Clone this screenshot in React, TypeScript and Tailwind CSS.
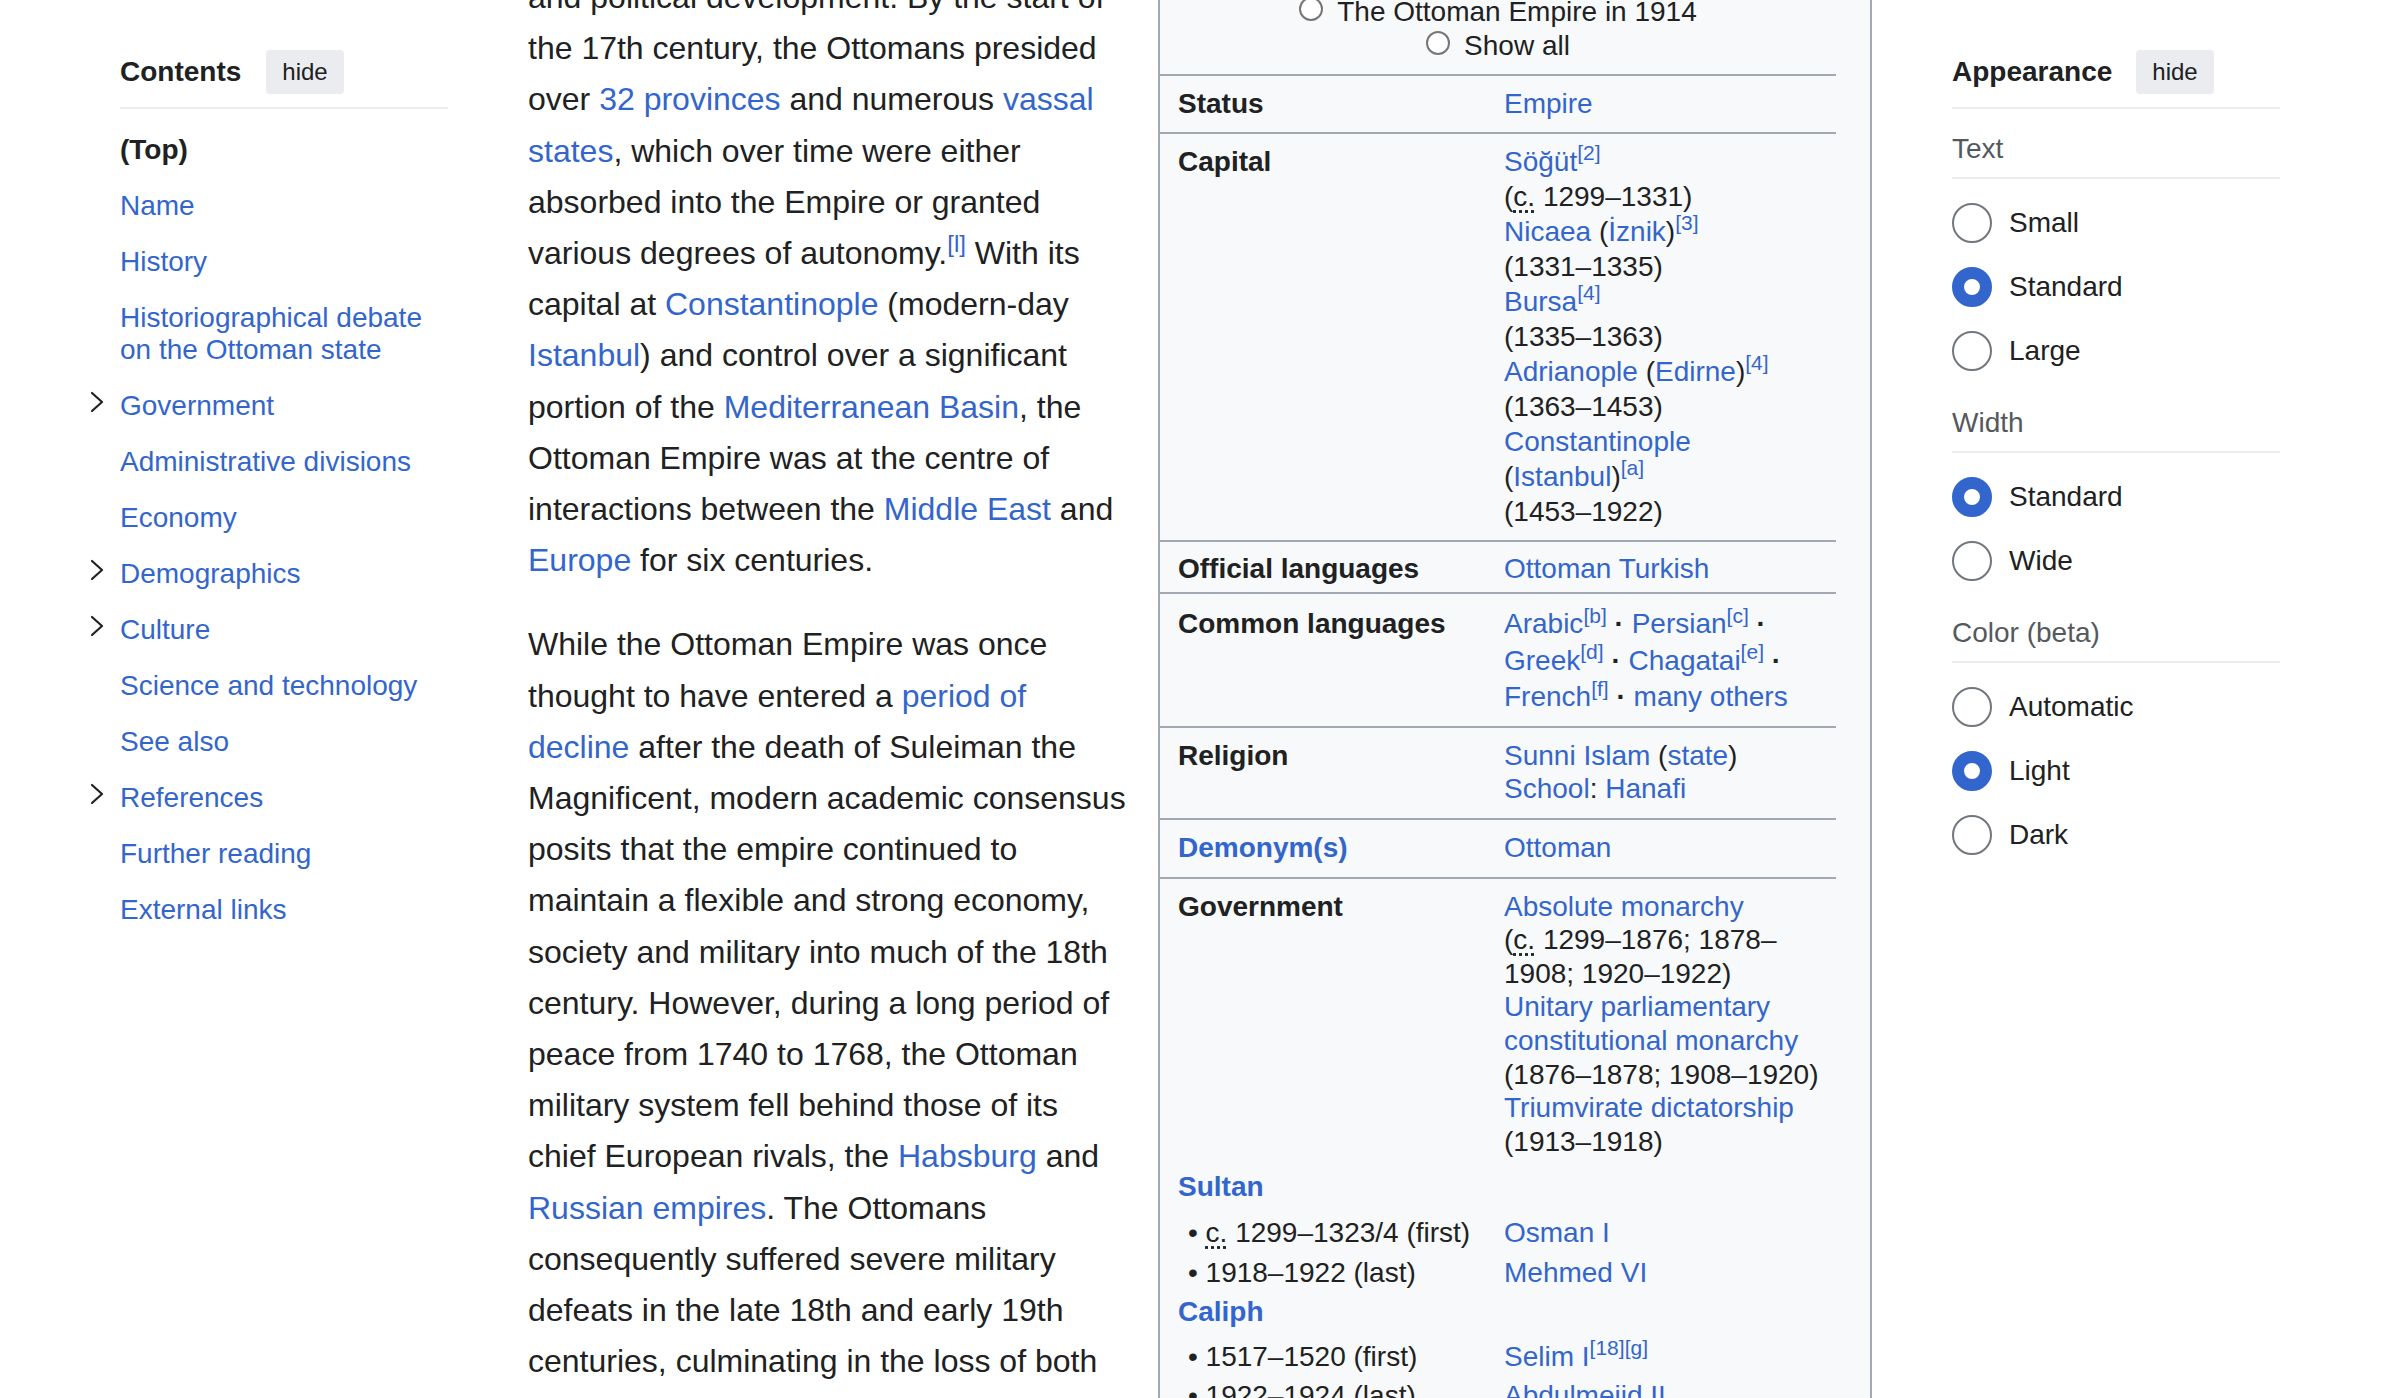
import React from "react";

function L({ children }: { children: React.ReactNode }) {
  return <a className="text-[#3366cc]">{children}</a>;
}

function Ref({ children }: { children: React.ReactNode }) {
  return <sup className="text-[#3366cc]">[{children}]</sup>;
}

function Circa() {
  return (
    <abbr title="circa" className="underline decoration-dotted underline-offset-[4px]">
      c.
    </abbr>
  );
}

function Chevron() {
  return (
    <svg viewBox="0 0 14 22" fill="none" className="h-[22px] w-[14px]" stroke="#202122" strokeWidth={2.2}>
      <path d="M2 2l10 9-10 9" strokeLinecap="round" strokeLinejoin="round" />
    </svg>
  );
}

function PanelHeader({ title, gap }: { title: string; gap: string }) {
  return (
    <>
      <div className={`flex h-[44px] items-center ${gap}`}>
        <span className="text-[28px] font-bold leading-[32px]">{title}</span>
        <button className="h-[44px] rounded-[4px] bg-[#eaecf0] px-[16px] text-[24px] leading-[32px] text-[#202122]">
          hide
        </button>
      </div>
      <div className="mt-[13px] h-[2px] bg-[#eaecf0]" />
    </>
  );
}

const tocItems: { label: React.ReactNode; sub?: boolean }[] = [
  { label: "Name" },
  { label: "History" },
  {
    label: (
      <>
        Historiographical debate
        <br />
        on the Ottoman state
      </>
    ),
  },
  { label: "Government", sub: true },
  { label: "Administrative divisions" },
  { label: "Economy" },
  { label: "Demographics", sub: true },
  { label: "Culture", sub: true },
  { label: "Science and technology" },
  { label: "See also" },
  { label: "References", sub: true },
  { label: "Further reading" },
  { label: "External links" },
];

function Contents() {
  return (
    <nav className="mt-[50px] w-[328px] shrink-0">
      <PanelHeader title="Contents" gap="gap-[25px]" />
      <ul className="mt-[13px] text-[28px] leading-[32px]">
        <li className="py-[12px] font-bold">(Top)</li>
        {tocItems.map((item, i) => (
          <li key={i} className="-ml-[36px] flex py-[12px]">
            <span className="w-[36px] shrink-0 pl-[6px] pt-[1px]">{item.sub && <Chevron />}</span>
            <L>{item.label}</L>
          </li>
        ))}
      </ul>
    </nav>
  );
}

const para1: React.ReactNode[] = [
  <>and political development. By the start of</>,
  <>the 17th century, the Ottomans presided</>,
  <>
    over <L>32 provinces</L> and numerous <L>vassal</L>
  </>,
  <>
    <L>states</L>, which over time were either
  </>,
  <>absorbed into the Empire or granted</>,
  <>
    various degrees of autonomy.<Ref>l</Ref> With its
  </>,
  <>
    capital at <L>Constantinople</L> (modern-day
  </>,
  <>
    <L>Istanbul</L>) and control over a significant
  </>,
  <>
    portion of the <L>Mediterranean Basin</L>, the
  </>,
  <>Ottoman Empire was at the centre of</>,
  <>
    interactions between the <L>Middle East</L> and
  </>,
  <>
    <L>Europe</L> for six centuries.
  </>,
];

const para2: React.ReactNode[] = [
  <>While the Ottoman Empire was once</>,
  <>
    thought to have entered a <L>period of</L>
  </>,
  <>
    <L>decline</L> after the death of Suleiman the
  </>,
  <>Magnificent, modern academic consensus</>,
  <>posits that the empire continued to</>,
  <>maintain a flexible and strong economy,</>,
  <>society and military into much of the 18th</>,
  <>century. However, during a long period of</>,
  <>peace from 1740 to 1768, the Ottoman</>,
  <>military system fell behind those of its</>,
  <>
    chief European rivals, the <L>Habsburg</L> and
  </>,
  <>
    <L>Russian empires</L>. The Ottomans
  </>,
  <>consequently suffered severe military</>,
  <>defeats in the late 18th and early 19th</>,
  <>centuries, culminating in the loss of both</>,
  <>Ottoman territories and alliances.</>,
];

function Lines({ lines }: { lines: React.ReactNode[] }) {
  return (
    <>
      {lines.map((line, i) => (
        <span key={i} className="block whitespace-nowrap">
          {line}
        </span>
      ))}
    </>
  );
}

function Article() {
  return (
    <main className="-mt-[28px] ml-[80px] w-[630px] shrink-0 text-[32px] leading-[51.2px] text-[#202122]">
      <p>
        <Lines lines={para1} />
      </p>
      <p className="mt-[33px]">
        <Lines lines={para2} />
      </p>
    </main>
  );
}

function SmallRadio() {
  return (
    <span className="mr-[14px] inline-block h-[24px] w-[24px] rounded-full border-2 border-[#767676] bg-white align-baseline" />
  );
}

function Row({
  label,
  children,
  className = "pt-[10px] pb-[12px]",
  leading = "leading-[33.6px]",
  border = true,
  sub = false,
}: {
  label: React.ReactNode;
  children?: React.ReactNode;
  className?: string;
  leading?: string;
  border?: boolean;
  sub?: boolean;
}) {
  return (
    <div
      className={`grid grid-cols-[326px_1fr] pl-[18px] ${leading} ${className} ${
        border ? "border-t-2 border-[#a2a9b1]" : ""
      }`}
    >
      <div className={sub ? "whitespace-nowrap pl-[10px]" : "font-bold"}>{label}</div>
      <div className="whitespace-nowrap">{children}</div>
    </div>
  );
}

const Dot = () => <b className="font-bold"> · </b>;

function Infobox() {
  return (
    <aside className="w-[714px] shrink-0 self-stretch border-x-2 border-[#a2a9b1] bg-[#f8f9fa] text-[28px] leading-[33.6px] text-[#202122]">
      <div className="w-[676px]">
        <div className="-mt-[5px] pb-[12px] text-center">
          <div>
            <SmallRadio />
            The Ottoman Empire in 1914
          </div>
          <div>
            <SmallRadio />
            Show all
          </div>
        </div>

        <Row label="Status" className="pt-[11px] pb-[11px]">
          <L>Empire</L>
        </Row>

        <Row label="Capital" leading="leading-[35px]" className="pt-[10px] pb-[11px]">
          <div>
            <L>Söğüt</L>
            <Ref>2</Ref>
          </div>
          <div>
            (<Circa /> 1299–1331)
          </div>
          <div>
            <L>Nicaea</L> (<L>İznik</L>)<Ref>3</Ref>
          </div>
          <div>(1331–1335)</div>
          <div>
            <L>Bursa</L>
            <Ref>4</Ref>
          </div>
          <div>(1335–1363)</div>
          <div>
            <L>Adrianople</L> (<L>Edirne</L>)<Ref>4</Ref>
          </div>
          <div>(1363–1453)</div>
          <div>
            <L>Constantinople</L>
          </div>
          <div>
            (<L>Istanbul</L>)<Ref>a</Ref>
          </div>
          <div>(1453–1922)</div>
        </Row>

        <Row label="Official languages" className="pt-[10px] pb-[7px]">
          <L>Ottoman Turkish</L>
        </Row>

        <Row label="Common languages" leading="leading-[36.5px]" className="pt-[12px] pb-[10px]">
          <div>
            <L>Arabic</L>
            <Ref>b</Ref>
            <Dot />
            <L>Persian</L>
            <Ref>c</Ref>
            <Dot />
          </div>
          <div>
            <L>Greek</L>
            <Ref>d</Ref>
            <Dot />
            <L>Chagatai</L>
            <Ref>e</Ref>
            <Dot />
          </div>
          <div>
            <L>French</L>
            <Ref>f</Ref>
            <Dot />
            <L>many others</L>
          </div>
        </Row>

        <Row label="Religion" className="pt-[11px] pb-[12px]">
          <div>
            <L>Sunni Islam</L> (<L>state</L>)
          </div>
          <div>
            <L>School</L>: <L>Hanafi</L>
          </div>
        </Row>

        <Row label={<L>Demonym(s)</L>} className="pt-[11px] pb-[12px]">
          <L>Ottoman</L>
        </Row>

        <Row label="Government" className="pt-[11px] pb-[9px]">
          <div>
            <L>Absolute monarchy</L>
          </div>
          <div>
            (<Circa /> 1299–1876; 1878–
          </div>
          <div>1908; 1920–1922)</div>
          <div>
            <L>Unitary parliamentary</L>
          </div>
          <div>
            <L>constitutional monarchy</L>
          </div>
          <div>(1876–1878; 1908–1920)</div>
          <div>
            <L>Triumvirate dictatorship</L>
          </div>
          <div>(1913–1918)</div>
        </Row>

        <Row label={<L>Sultan</L>} border={false} className="pt-[3px] pb-[9px]" />
        <Row
          sub
          border={false}
          className="py-[3px]"
          label={
            <>
              • <Circa /> 1299–1323/4 (first)
            </>
          }
        >
          <L>Osman I</L>
        </Row>
        <Row sub border={false} className="py-[3px]" label="• 1918–1922 (last)">
          <L>Mehmed VI</L>
        </Row>
        <Row label={<L>Caliph</L>} border={false} className="pt-[3px] pb-[8px]" />
        <Row sub border={false} className="py-[3px]" label="• 1517–1520 (first)">
          <L>Selim I</L>
          <Ref>18</Ref>
          <Ref>g</Ref>
        </Row>
        <Row sub border={false} className="py-[3px]" label="• 1922–1924 (last)">
          <L>Abdulmejid II</L>
        </Row>
        <Row label={<L>Grand Vizier</L>} border={false} className="pt-[3px] pb-[8px]" />
        <Row sub border={false} className="py-[3px]" label="• 1320–1331 (first)">
          <L>Alaeddin Pasha</L>
        </Row>
      </div>
    </aside>
  );
}

function BigRadio({ label, checked = false }: { label: string; checked?: boolean }) {
  return (
    <li className="flex h-[64px] items-center gap-[17px]">
      <span
        className={`h-[40px] w-[40px] shrink-0 rounded-full bg-white ${
          checked ? "border-[12px] border-[#3366cc]" : "border-2 border-[#72777d]"
        }`}
      />
      <span className="text-[28px] leading-[32px] text-[#202122]">{label}</span>
    </li>
  );
}

function Section({ title, options, checked }: { title: string; options: string[]; checked: string }) {
  return (
    <div>
      <div className="mt-[24px] text-[28px] leading-[32px] text-[#54595d]">{title}</div>
      <div className="mt-[12px] h-[2px] bg-[#eaecf0]" />
      <ul className="mt-[12px]">
        {options.map((o) => (
          <BigRadio key={o} label={o} checked={o === checked} />
        ))}
      </ul>
    </div>
  );
}

function Appearance() {
  return (
    <aside className="ml-[80px] mt-[50px] w-[328px] shrink-0">
      <PanelHeader title="Appearance" gap="gap-[24px]" />
      <Section title="Text" options={["Small", "Standard", "Large"]} checked="Standard" />
      <Section title="Width" options={["Standard", "Wide"]} checked="Standard" />
      <Section title="Color (beta)" options={["Automatic", "Light", "Dark"]} checked="Light" />
    </aside>
  );
}

export default function App() {
  return (
    <div className="flex h-[1398px] w-[2400px] items-start overflow-hidden bg-white pl-[120px] font-['Liberation_Sans',Arial,sans-serif] text-[#202122]">
      <Contents />
      <Article />
      <Infobox />
      <Appearance />
    </div>
  );
}
